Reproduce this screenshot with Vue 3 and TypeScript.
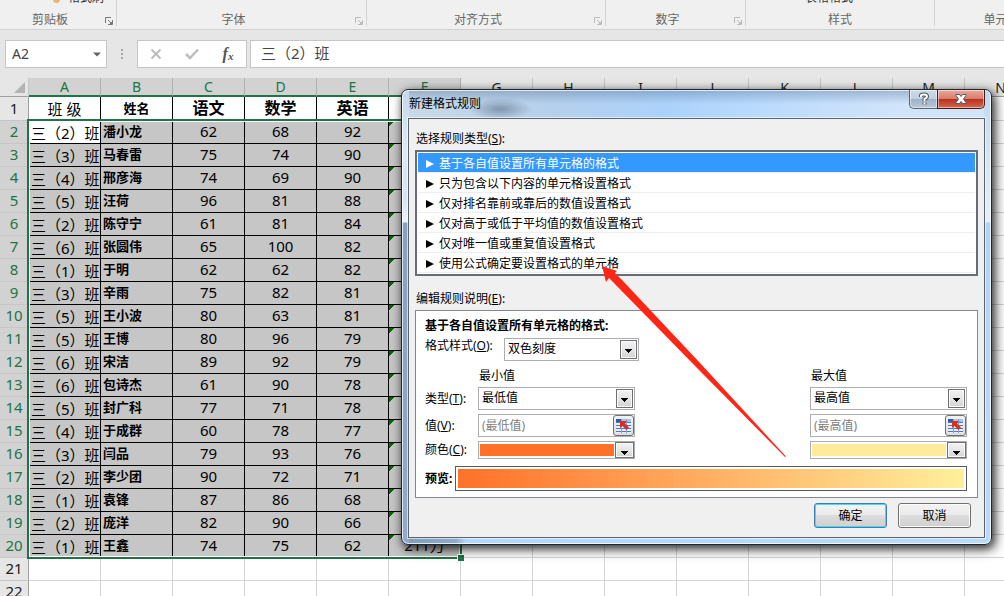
<script setup lang="ts">
import { ref } from 'vue'

interface RibbonGroup {
  label: string
  size: string
  command?: string
  launcher?: 'dark' | 'light'
}

const ribbon: RibbonGroup[] = [
  { label: '剪贴板', size: 'clipboard', command: '格式刷', launcher: 'dark' },
  { label: '字体', size: 'font', launcher: 'light' },
  { label: '对齐方式', size: 'align', launcher: 'light' },
  { label: '数字', size: 'number', launcher: 'light' },
  { label: '样式', size: 'styles', command: '表格格式' },
  { label: '单元格', size: 'cells' },
]

const columns = 'ABCDEFGHIJKLMN'.split('')
const emptyColumns = columns.slice(6)

const pupils: [number, string, number, number, number][] = [
  [2, '潘小龙', 62, 68, 92],
  [3, '马春雷', 75, 74, 90],
  [4, '邢彦海', 74, 69, 90],
  [5, '汪荷', 96, 81, 88],
  [2, '陈守宁', 61, 81, 84],
  [6, '张圆伟', 65, 100, 82],
  [1, '于明', 62, 62, 82],
  [3, '辛雨', 75, 82, 81],
  [5, '王小波', 80, 63, 81],
  [5, '王博', 80, 96, 79],
  [6, '宋洁', 89, 92, 79],
  [6, '包诗杰', 61, 90, 78],
  [5, '封广科', 77, 71, 78],
  [4, '于成群', 60, 78, 77],
  [3, '闫品', 79, 93, 76],
  [2, '李少团', 90, 72, 71],
  [1, '袁锋', 87, 86, 68],
  [2, '庞洋', 82, 90, 66],
  [1, '王鑫', 74, 75, 62],
]

const rules = [
  '基于各自值设置所有单元格的格式',
  '只为包含以下内容的单元格设置格式',
  '仅对排名靠前或靠后的数值设置格式',
  '仅对高于或低于平均值的数值设置格式',
  '仅对唯一值或重复值设置格式',
  '使用公式确定要设置格式的单元格',
]
const selectedRule = ref(0)
const cellName = ref('A2')
const formula = ref('三（2）班')
</script>

<template>
  <div class="app" lang="zh-CN">
    <header class="ribbon">
      <section v-for="g in ribbon" :key="g.label" class="group" :class="g.size">
        <div v-if="g.command" class="command">
          <i v-if="g.size === 'clipboard'" class="brush"></i>{{ g.command }}
        </div>
        <div class="caption">
          <span class="caption-text">{{ g.label }}</span>
          <button v-if="g.launcher" class="launcher" :class="g.launcher" :aria-label="g.label">
            <svg width="8" height="8" viewBox="0 0 8 8" fill="none" stroke="currentColor">
              <path d="M.5 6V.5H6M3 3l3 3M7.5 3v4.500H3M5 6.500h2M6.500 5v2" />
            </svg>
          </button>
        </div>
      </section>
    </header>

    <div class="formula-bar">
      <div class="name-box">
        <input v-model="cellName" aria-label="名称框" />
        <button class="name-arrow" aria-label="名称列表">
          <svg width="8" height="5" viewBox="0 0 8 5"><path d="M0 .5h8L4 4.500z" fill="#666" /></svg>
        </button>
      </div>
      <svg class="grip" width="2" height="12" viewBox="0 0 2 12" fill="#a6a6a6">
        <path d="M0 1h2v2H0zM0 5h2v2H0zM0 9h2v2H0z" />
      </svg>
      <div class="edit-buttons">
        <button aria-label="取消输入">
          <svg width="12" height="12" viewBox="0 0 12 12" fill="none" stroke="#bdbdbd" stroke-width="2">
            <path d="M1.500 1.500l9 9M10.500 1.500l-9 9" />
          </svg>
        </button>
        <button aria-label="输入">
          <svg width="14" height="12" viewBox="0 0 14 12" fill="none" stroke="#bdbdbd" stroke-width="2.500">
            <path d="M1 6l4 4 8-8.500" />
          </svg>
        </button>
        <button class="fx" aria-label="插入函数">f<sub>x</sub></button>
      </div>
      <input v-model="formula" class="formula" aria-label="编辑栏" />
    </div>

    <main class="sheet">
      <table>
        <colgroup>
          <col class="col-head" />
          <col v-for="c in columns" :key="c" />
        </colgroup>
        <thead>
          <tr>
            <th class="corner">
              <svg width="11" height="11" viewBox="0 0 11 11"><path d="M11 0v11H0z" fill="#b3b3b3" /></svg>
            </th>
            <th v-for="(c, i) in columns" :key="c" :class="{ on: i < 6 }">{{ c }}</th>
          </tr>
        </thead>
        <tbody>
          <tr class="titles">
            <th>1</th>
            <td class="data plain">班 级</td>
            <td class="data small">姓名</td>
            <td class="data">语文</td>
            <td class="data">数学</td>
            <td class="data">英语</td>
            <td class="data"></td>
            <td v-for="c in emptyColumns" :key="c"></td>
          </tr>
          <tr v-for="(p, i) in pupils" :key="i">
            <th class="on">{{ i + 2 }}</th>
            <td class="data fill room" :class="{ active: i === 0 }">三（{{ p[0] }}）班</td>
            <td class="data fill name">{{ p[1] }}</td>
            <td class="data fill">{{ p[2] }}</td>
            <td class="data fill">{{ p[3] }}</td>
            <td class="data fill">{{ p[4] }}</td>
            <td class="data fill flagged">{{ i === pupils.length - 1 ? '211万' : '' }}</td>
            <td v-for="c in emptyColumns" :key="c"></td>
          </tr>
          <tr v-for="n in [21, 22]" :key="n">
            <th>{{ n }}</th>
            <td v-for="c in columns" :key="c"></td>
          </tr>
        </tbody>
      </table>
      <div class="selection"><i class="handle"></i></div>
    </main>

    <div class="dialog" role="dialog" aria-labelledby="dialog-title">
      <div class="titlebar">
        <h1 id="dialog-title">新建格式规则</h1>
        <div class="window-buttons">
          <button class="help" aria-label="帮助">
            <svg width="12" height="14" viewBox="0 0 12 14" fill="none" stroke-linejoin="round">
              <path d="M3 5V3.500Q3 2.500 6 2.500T9 4.500Q9 6 6.500 7V9M6.500 10.500v2" stroke="#4c5462" stroke-width="4" />
              <path d="M3 5V3.500Q3 2.500 6 2.500T9 4.500Q9 6 6.500 7V9M6.500 10.500v2" stroke="#fff" stroke-width="2" />
            </svg>
          </button>
          <button class="close" aria-label="关闭">
            <svg width="12" height="10" viewBox="0 0 12 10">
              <path d="M1 .5h3.500L6 2.500 7.500.5H11v1L8.500 5l2.500 3.500v1H7.500L6 7.500 4.500 9.500H1v-1L3.500 5 1 1.500z" fill="#fff" stroke="#535665" />
            </svg>
          </button>
        </div>
      </div>

      <div class="client">
        <p id="rule-label" class="section">选择规则类型(<u>S</u>):</p>
        <ul class="rules" aria-labelledby="rule-label">
          <li v-for="(r, i) in rules" :key="r">
            <button :class="{ chosen: i === selectedRule }" @click="selectedRule = i">
              <svg width="8" height="8" viewBox="0 0 8 8"><path d="M0 0l8 4-8 4z" fill="currentColor" /></svg>
              {{ r }}
            </button>
          </li>
        </ul>

        <p class="section second">编辑规则说明(<u>E</u>):</p>
        <div class="editor">
          <h2>基于各自值设置所有单元格的格式:</h2>
          <div class="style-row">
            <label for="style">格式样式(<u>O</u>):</label>
            <div class="combo">
              <select id="style"><option>双色刻度</option></select>
              <i class="drop"></i>
            </div>
          </div>

          <div class="fields heads">
            <span class="min">最小值</span>
            <span class="max">最大值</span>
          </div>
          <div class="fields">
            <label for="type-min">类型(<u>T</u>):</label>
            <div class="combo">
              <select id="type-min"><option>最低值</option></select>
              <i class="drop"></i>
            </div>
            <div class="combo max">
              <select aria-label="最大值类型"><option>最高值</option></select>
              <i class="drop"></i>
            </div>
          </div>
          <div class="fields">
            <label for="value-min">值(<u>V</u>):</label>
            <div v-for="side in ['min', 'max']" :key="side" class="range" :class="side">
              <input
                :id="'value-' + side"
                :placeholder="side === 'min' ? '(最低值)' : '(最高值)'"
                :aria-label="side === 'max' ? '最大值' : undefined"
              />
              <button aria-label="选择单元格">
                <svg width="15" height="14" viewBox="0 0 15 14">
                  <path d="M0 0h15v14H0z" fill="#e6effb" />
                  <path d="M0 0h5v3H0z" fill="#2c5cb8" />
                  <path d="M5 0h10v3H5z" fill="#a9c4ec" />
                  <path d="M0 3.500h15M0 6.500h15M0 9.500h15M0 12.500h15" stroke="#4a78c4" fill="none" />
                  <path d="M5.500 0v14M10.500 0v14" stroke="#7fa2da" fill="none" />
                  <path d="M4 2h7L9 4.500l4 4L10.500 11l-4-4L4 9z" fill="#d8301c" />
                </svg>
              </button>
            </div>
          </div>
          <div class="fields last">
            <label for="color-min">颜色(<u>C</u>):</label>
            <button id="color-min" class="color"><i class="swatch orange"></i><i class="drop"></i></button>
            <button class="color max" aria-label="最大值颜色"><i class="swatch yellow"></i><i class="drop"></i></button>
          </div>
          <div class="preview-row">
            <strong>预览:</strong>
            <div class="preview"></div>
          </div>
        </div>

        <footer class="actions">
          <button class="ok">确定</button>
          <button>取消</button>
        </footer>
      </div>
    </div>

    <svg class="pointer" width="186" height="194" viewBox="600 264 186 194">
      <path d="M602 266L617 271 615 273 622 280 700 363 786 456.500 785 457 700 371 611 280 609 278 606 282z" fill="#ff2615" />
    </svg>
  </div>
</template>

<style>
html,
body {
  height: 100%;
  overflow: hidden;
}
</style>

<style scoped>
.app {
  position: relative;
  display: flex;
  flex-direction: column;
  height: 100vh;
  overflow: hidden;
  background: #fff;
  color: #000;
  font: 12px/16px "Noto Sans", "Noto Sans CJK SC", sans-serif;
}
.app *,
.app *::before,
.app *::after {
  box-sizing: border-box;
}
button,
input,
select {
  margin: 0;
  padding: 0;
  border: 0;
  border-radius: 0;
  background: none;
  color: inherit;
  font: inherit;
  outline: 0;
}
svg,
i {
  display: block;
}
p,
h1,
h2,
ul {
  margin: 0;
  padding: 0;
  font-size: 12px;
  font-weight: normal;
  list-style: none;
}

/* ribbon */
.ribbon {
  display: flex;
  flex: none;
  height: 30px;
  overflow: hidden;
  background: #f0f0f0;
  border-bottom: 1px solid #d2d2d2;
  color: #666;
}
.group {
  display: flex;
  flex: none;
  flex-direction: column;
  justify-content: flex-end;
  height: 26px;
  border-right: 1px solid #d2d2d2;
}
.clipboard { width: 117px; }
.font { width: 250px; }
.align { width: 239px; }
.number { width: 140px; }
.styles { width: 189px; }
.cells { width: 134px; }
.command {
  display: flex;
  flex: none;
  gap: 8px;
  margin-bottom: 6px;
  color: #333;
}
.clipboard .command { padding-left: 53px; }
.styles .command {
  justify-content: center;
  padding-right: 22px;
}
.brush {
  align-self: flex-end;
  width: 7px;
  height: 7px;
  margin-bottom: 3px;
  border-radius: 0 0 4px 4px;
  background: #e9b870;
}
.caption {
  display: flex;
  flex: none;
  align-items: center;
  margin-bottom: -2px;
}
.caption-text {
  flex: 1;
  text-align: center;
}
.launcher {
  width: 16px;
  padding: 2px 0 0 5px;
}
.launcher.dark { color: #777; }
.launcher.light { color: #bbb; }

/* formula bar */
.formula-bar {
  display: flex;
  flex: none;
  align-items: center;
  height: 48px;
  padding-left: 5px;
  background: #e6e6e6;
  color: #444;
  font-size: 15px;
}
.name-box,
.edit-buttons,
.formula {
  height: 28px;
  background: #fff;
  border: 1px solid #c6c6c6;
}
.name-box {
  display: flex;
  width: 102px;
}
.name-box input {
  width: 81px;
  padding-left: 6px;
  font-size: 14px;
}
.name-arrow {
  display: grid;
  flex: 1;
  place-items: center;
}
.grip { margin: 0 14px; }
.edit-buttons {
  display: grid;
  grid-template-columns: repeat(3, 1fr);
  width: 110px;
}
.edit-buttons button {
  display: grid;
  place-items: center;
}
.edit-buttons .fx {
  display: block;
  color: #555;
  font: italic bold 16px/24px "Liberation Serif", serif;
}
.fx sub {
  font-size: 11px;
  line-height: 0;
  vertical-align: -1px;
}
.formula {
  flex: 1;
  margin-left: 3px;
  padding: 0 0 3px 10px;
  border-right: 0;
}

/* sheet */
.sheet {
  position: relative;
  flex: 1;
  overflow: hidden;
}
table {
  width: 1037px;
  table-layout: fixed;
  border-collapse: separate;
  border-spacing: 0;
  font-size: 15px;
  line-height: 20px;
}
.col-head { width: 29px; }
td,
th {
  height: 23px;
  padding: 0 0 2px;
  overflow: hidden;
  border: solid #d4d4d4;
  border-width: 0 1px 1px 0;
  text-align: center;
  white-space: nowrap;
}
th {
  background: #e6e6e6;
  border-color: #c6c6c6;
  color: #222;
  font-weight: normal;
}
tbody th { border-right-color: #9f9f9f; }
th.on {
  background: #d2d2d2;
  color: #217346;
}
thead th {
  height: 19px;
  padding: 0;
  border-color: #c6c6c6;
  border-bottom-color: #9f9f9f;
  font-size: 14px;
  line-height: 17px;
}
thead th.on {
  border-right-color: #b0b0b0;
  border-bottom: 2px solid #217346;
}
.corner svg { margin: 2px 3px 2px auto; }
.titles td,
.titles th { height: 24px; }
.data { border-color: #000; }
.titles .data {
  font-size: 16px;
  font-weight: bold;
}
.titles .small { font-size: 13px; }
.titles .plain {
  padding-bottom: 0;
  font-size: 15px;
  font-weight: normal;
}
.fill { background: #c6c6c6; }
.active { background: #fff; }
.room {
  padding: 2px 0 0 2px;
  text-align: left;
}
.name {
  padding-left: 2px;
  font-size: 13px;
  font-weight: bold;
  text-align: left;
}
.flagged {
  background: linear-gradient(135deg, #006a00 4px, transparent 4px) #c6c6c6;
}
.selection {
  position: absolute;
  top: 41px;
  left: 27px;
  width: 435px;
  height: 440px;
  border: 2px solid #217346;
  box-shadow: inset 0 0 0 1px #fff;
}
.handle {
  position: absolute;
  right: -4px;
  bottom: -4px;
  width: 7px;
  height: 7px;
  border: solid #fff;
  border-width: 1px 0 0 1px;
  background: #217346;
}

/* dialog window */
.dialog {
  position: absolute;
  top: 89px;
  right: 12px;
  left: 401px;
  padding: 0 6px 6px;
  border: 1px solid #20262e;
  border-radius: 7px;
  background:
    radial-gradient(ellipse 32px 11px at 98px 19px, rgba(70, 90, 115, 0.5), transparent) no-repeat,
    linear-gradient(#c5d8ec 0, #dce9f6 60px, #d5e4f3 110px, #eef5fb 132px, #86a2c0 133px, #8fabc9 100%) left / 7px 100% no-repeat,
    linear-gradient(#c0d8f0 0, #d2e4f6 60px, #e4eff9 132px, #b0d4f8 133px, #b9dafa 100%) right / 7px 100% no-repeat,
    linear-gradient(90deg, #7e9cb8, #8eacca 54px, #b5d8f8 64px, #b9dafa) bottom / 100% 7px no-repeat,
    linear-gradient(rgba(80, 110, 150, 0.4), transparent 14px),
    linear-gradient(90deg, #cbd9e7, #b5d0ec 150px, #acd2fb 45%, #b9dafd 60%, #d2e4fa 85%, #d2e4f8);
  box-shadow:
    inset 0 0 0 1px rgba(255, 255, 255, 0.75),
    2px 3px 8px rgba(0, 0, 0, 0.65),
    3px 4px 14px rgba(0, 0, 0, 0.45);
}
.titlebar {
  display: flex;
  justify-content: space-between;
  height: 28px;
}
.titlebar h1 {
  padding: 6px 0 0 1px;
}
.window-buttons {
  display: flex;
  align-items: flex-start;
}
.window-buttons button {
  display: grid;
  place-items: center;
  height: 19px;
  border: 1px solid #5b6673;
  border-top: 0;
  box-shadow: inset 0 0 0 1px rgba(255, 255, 255, 0.5);
}
.window-buttons .help {
  width: 28px;
  border-right: 0;
  border-radius: 0 0 0 5px;
  background: linear-gradient(#cddaea 0, #c0cede 9px, #9fb1c5 9px, #b7c8da);
}
.window-buttons .close {
  width: 48px;
  border-color: #4a1a1a;
  border-radius: 0 0 5px 0;
  background: linear-gradient(#e6a99c 0, #d97b6b 9px, #b8301c 9px, #d5674c);
}
.client {
  padding: 12px 6px 9px;
  border: 1px solid #59646f;
  background: #f0f0f0;
  box-shadow: 0 0 0 1px rgba(255, 255, 255, 0.6);
}
.section { margin: 0 0 3px 1px; }
.section.second { margin-top: 15px; }
.rules {
  padding: 1px;
  border: 2px solid #696c77;
  background: #fff;
}
.rules li {
  height: 20px;
  border-bottom: 1px solid #eee;
}
.rules button {
  display: flex;
  align-items: center;
  gap: 5px;
  width: 100%;
  height: 19px;
  padding: 2px 0 0 8px;
}
.rules .chosen {
  background: #3399ff;
  color: #fff;
}

/* rule editor */
.editor {
  padding: 7px 10px 6px 9px;
  border: 1px solid #828790;
  background: #fff;
}
.editor h2 {
  margin-bottom: 4px;
  font-weight: bold;
}
.style-row {
  display: flex;
  align-items: flex-start;
  margin-bottom: 7px;
}
.style-row label { width: 79px; }
.style-row .combo { width: 135px; }
.fields {
  display: grid;
  grid-template-columns: 53px 157px 1fr 157px;
  align-items: center;
  margin-bottom: 4px;
}
.fields.heads { margin-bottom: 3px; }
.fields.last { margin-bottom: 7px; }
.heads .min,
.heads .max { padding-left: 1px; }
.fields .min { grid-column: 2; }
.fields .max { grid-column: 4; }
.combo {
  display: grid;
  height: 23px;
  border: 1px solid #abadb3;
}
.combo select {
  grid-area: 1 / 1;
  height: 21px;
  padding: 0 20px 1px 3px;
  appearance: none;
}
.combo .drop { grid-area: 1 / 1; }
.drop {
  justify-self: end;
  align-self: center;
  width: 17px;
  height: 19px;
  margin-right: 1px;
  border: 1px solid #707070;
  background:
    linear-gradient(#000, #000) center 8px / 7px 1px no-repeat,
    linear-gradient(#000, #000) center 9px / 5px 1px no-repeat,
    linear-gradient(#000, #000) center 10px / 3px 1px no-repeat,
    linear-gradient(#000, #000) center 11px / 1px 1px no-repeat,
    linear-gradient(#f2f2f2, #e6e6e6 50%, #d2d2d2);
  box-shadow: inset 0 0 0 1px #fafafa;
  pointer-events: none;
}
.range {
  display: flex;
  height: 23px;
  border: 1px solid #abadb3;
}
.range input {
  flex: 1;
  min-width: 0;
  padding: 0 0 0 3px;
}
.range input::placeholder { color: #808080; }
.range button {
  display: grid;
  flex: none;
  place-items: center;
  width: 21px;
  height: 21px;
  border: 1px solid #707070;
  border-radius: 3px;
  background: linear-gradient(#f2f2f2, #dcdcdc);
}
.color {
  display: flex;
  align-items: center;
  height: 18px;
  padding-left: 1px;
  border: 1px solid #abadb3;
}
.swatch {
  flex: 1;
  height: 12px;
}
.orange { background: #ff7128; }
.yellow { background: #ffeb9c; }
.color .drop {
  width: 19px;
  height: 16px;
  margin: 0 0 0 1px;
}
.preview-row {
  display: flex;
  align-items: center;
}
.preview-row strong {
  width: 30px;
  white-space: nowrap;
}
.preview {
  flex: 1;
  height: 25px;
  padding: 2px;
  border: 1px solid #5a5a5a;
  background: linear-gradient(90deg, #ff7128, #ffef9c) content-box;
}

.actions {
  display: flex;
  justify-content: flex-end;
  gap: 11px;
  padding: 5px 7px 0 0;
}
.actions button {
  width: 73px;
  height: 25px;
  border: 1px solid #707070;
  border-radius: 3px;
  background: linear-gradient(#f3f3f3 0, #ebebeb 50%, #dddddd 50%, #cfcfcf);
  box-shadow: inset 0 0 0 1px #fcfcfc;
}
.actions .ok {
  border-color: #3c7fb1;
  box-shadow: inset 0 0 0 1px #46d8fb;
}

.pointer {
  position: absolute;
  top: 264px;
  left: 600px;
  pointer-events: none;
}
</style>
